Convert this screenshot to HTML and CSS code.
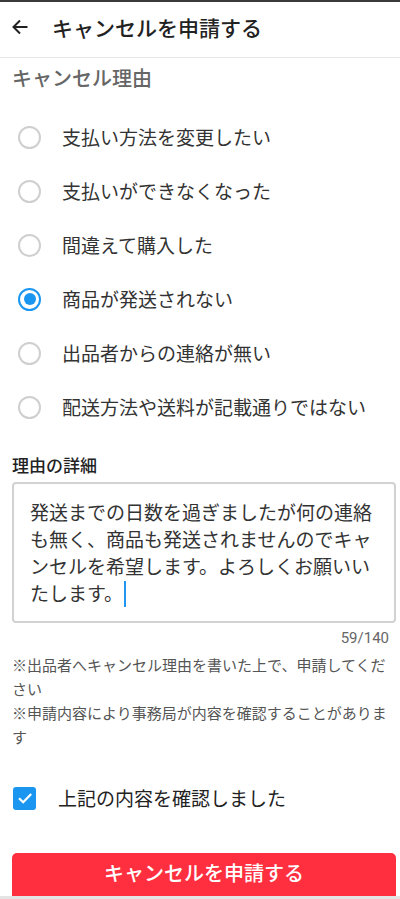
FILE: index.html
```html
<!DOCTYPE html>
<html lang="ja">
<head>
<meta charset="utf-8">
<meta name="viewport" content="width=device-width, initial-scale=1">
<title>キャンセルを申請する</title>
<link rel="stylesheet" href="styles.css">
</head>
<body>
<div class="topbar"></div>
<header class="header">
  <svg class="back" width="18" height="18" viewBox="0 0 18 18" aria-hidden="true">
    <path d="M16.5 9 H2.5 M9 2.5 L2.5 9 L9 15.5" fill="none" stroke="#222" stroke-width="2"/>
  </svg>
  <h1 class="title">キャンセルを申請する</h1>
</header>
<main class="content">
  <h2 class="section-title">キャンセル理由</h2>
  <ul class="reasons">
    <li class="reason"><span class="radio"></span><span class="reason-text">支払い方法を変更したい</span></li>
    <li class="reason"><span class="radio"></span><span class="reason-text">支払いができなくなった</span></li>
    <li class="reason"><span class="radio"></span><span class="reason-text">間違えて購入した</span></li>
    <li class="reason"><span class="radio radio-on"></span><span class="reason-text">商品が発送されない</span></li>
    <li class="reason"><span class="radio"></span><span class="reason-text">出品者からの連絡が無い</span></li>
    <li class="reason"><span class="radio"></span><span class="reason-text">配送方法や送料が記載通りではない</span></li>
  </ul>
  <h3 class="detail-label">理由の詳細</h3>
  <div class="detail-box">発送までの日数を過ぎましたが何の連絡<br>も無く、商品も発送されませんのでキャ<br>ンセルを希望します。よろしくお願いい<br>たします。<span class="caret"></span></div>
  <div class="counter">59/140</div>
  <p class="notes">※出品者へキャンセル理由を書いた上で、申請してください<br>※申請内容により事務局が内容を確認することがあります</p>
  <div class="confirm">
    <span class="checkbox">
      <svg width="22" height="22" viewBox="0 0 22 22" aria-hidden="true">
        <path d="M5 11.2 L9.2 15.2 L17.2 7" fill="none" stroke="#fff" stroke-width="2.2"/>
      </svg>
    </span>
    <span class="confirm-text">上記の内容を確認しました</span>
  </div>
  <button class="submit" type="button">キャンセルを申請する</button>
</main>
<div class="bottom-strip"></div>
</body>
</html>
```
FILE: styles.css
```css
* { box-sizing: border-box; }
html, body { margin: 0; padding: 0; }
body {
  width: 400px;
  height: 899px;
  overflow: hidden;
  background: #fff;
  color: #222;
  font-family: "Noto Sans CJK JP", "Noto Sans", sans-serif;
  position: relative;
}
.topbar { height: 2px; background: #3a3a3a; }
.header {
  height: 56px;
  display: flex;
  align-items: center;
  padding: 0 0 5px 11px;
  border-bottom: 1px solid #e6e6e6;
}
.back { display: block; flex: none; }
.title {
  margin: 0 0 0 23px;
  font-size: 21px;
  font-weight: 500;
  line-height: 28px;
  color: #222;
}
.content { padding: 0; }
.section-title {
  margin: 0;
  padding: 6px 12px 0;
  font-size: 20px;
  line-height: 28px;
  font-weight: 500;
  color: #666;
}
.reasons {
  list-style: none;
  margin: 18px 0 0;
  padding: 0;
}
.reason {
  height: 54px;
  display: flex;
  align-items: center;
  padding-left: 18px;
}
.radio {
  width: 23px;
  height: 23px;
  border: 2px solid #cfcfcf;
  border-radius: 50%;
  flex: none;
  display: flex;
  align-items: center;
  justify-content: center;
}
.radio-on { border: 2.5px solid #1a96f0; }
.radio-on::after {
  content: "";
  width: 12px;
  height: 12px;
  border-radius: 50%;
  background: #1a96f0;
}
.reason-text {
  margin-left: 21px;
  font-size: 19px;
  line-height: 26px;
  color: #333;
}
.detail-label {
  margin: 19px 0 0;
  padding: 0 12px;
  font-size: 17px;
  line-height: 24px;
  font-weight: 500;
  color: #222;
}
.detail-box {
  margin: 5px 4px 0 12px;
  height: 141px;
  border: 2px solid #d2d2d2;
  border-radius: 4px;
  padding: 14px 10px 0 16px;
  font-size: 19px;
  line-height: 27px;
  color: #333;
  white-space: nowrap;
}
.caret {
  display: inline-block;
  width: 2px;
  height: 26px;
  background: #2196f3;
  vertical-align: -6px;
  margin-left: 1px;
}
.counter {
  margin-top: 5px;
  padding-right: 11px;
  text-align: right;
  font-family: Roboto, "Noto Sans CJK JP", sans-serif;
  font-size: 15px;
  line-height: 20px;
  color: #666;
}
.notes {
  margin: 5px 0 0;
  padding: 0 8px 0 12px;
  font-size: 15px;
  line-height: 24px;
  color: #555;
}
.confirm {
  margin-top: 27px;
  height: 44px;
  display: flex;
  align-items: center;
  padding-left: 13px;
}
.checkbox {
  width: 23px;
  height: 23px;
  border-radius: 3px;
  background: #1a96f0;
  flex: none;
  display: flex;
  align-items: center;
  justify-content: center;
}
.checkbox svg { display: block; }
.confirm-text {
  margin-left: 22px;
  font-size: 19px;
  line-height: 26px;
  color: #222;
}
.submit {
  display: block;
  margin: 33px 4px 0 12px;
  width: 384px;
  height: 48px;
  border: none;
  border-radius: 5px 5px 0 0;
  background: #ff2f3f;
  color: #fff;
  font-family: "Noto Sans CJK JP", "Noto Sans", sans-serif;
  font-size: 20px;
  font-weight: 500;
  line-height: 28px;
  padding: 0 0 8px;
}
.bottom-strip {
  position: absolute;
  left: 0;
  right: 0;
  bottom: 0;
  height: 3px;
  background: #e4e4e4;
}
```
